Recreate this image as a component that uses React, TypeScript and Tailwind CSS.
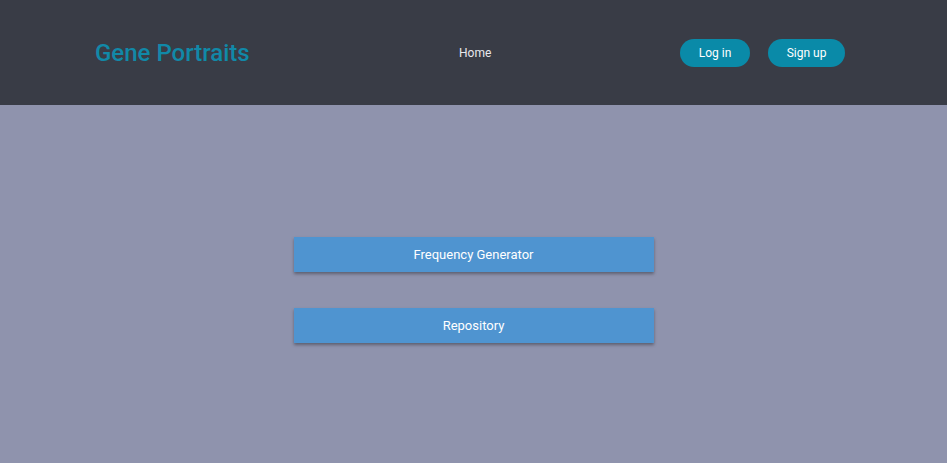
export default function App() {
  return (
    <div
      className="flex min-h-[463px] flex-col bg-[#8f93ad]"
      style={{ fontFamily: "Roboto, 'Liberation Sans', sans-serif" }}
    >
      <header className="flex h-[105px] items-center bg-[#393c46] pl-[95px] pr-[102px]">
        <a href="#" className="w-[364px] text-[24px] font-medium text-[#1189a8]">
          Gene Portraits
        </a>
        <nav className="flex flex-1">
          <a href="#" className="pt-px text-[12px] text-[#e8e8ec]">
            Home
          </a>
        </nav>
        <div className="flex gap-[18px]">
          <button className="h-[28px] w-[70px] rounded-full bg-[#0a8aa8] pt-px text-[12px] text-white">
            Log in
          </button>
          <button className="h-[28px] w-[77px] rounded-full bg-[#0a8aa8] pt-px text-[12px] text-white">
            Sign up
          </button>
        </div>
      </header>

      <main className="flex flex-col items-center gap-[36px] pt-[132px]">
        <button className="h-[35px] w-[360px] bg-[#4f94d0] pt-px text-[13px] text-white shadow-[0_2px_3px_rgba(0,0,0,0.35)]">
          Frequency Generator
        </button>
        <button className="h-[35px] w-[360px] bg-[#4f94d0] pt-px text-[13px] text-white shadow-[0_2px_3px_rgba(0,0,0,0.35)]">
          Repository
        </button>
      </main>
    </div>
  );
}
